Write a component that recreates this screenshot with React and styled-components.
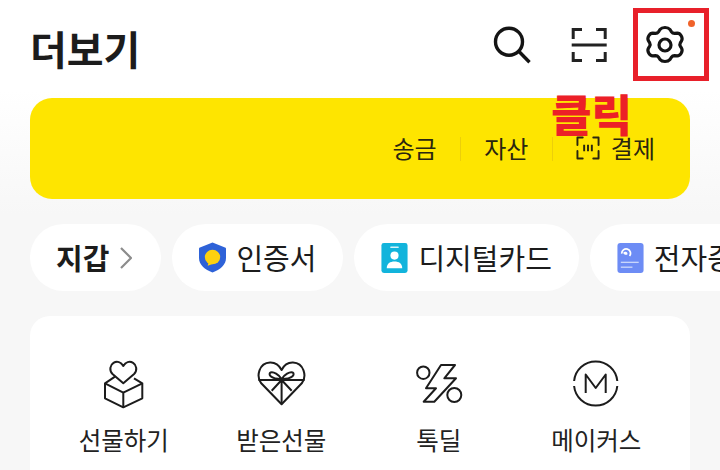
import styled, { createGlobalStyle } from "styled-components";

const Global = createGlobalStyle`
  html, body { margin: 0; padding: 0; }
  body {
    width: 720px;
    height: 470px;
    overflow: hidden;
    background: linear-gradient(to bottom, #ffffff 0, #ffffff 90px, #f7f7f7 215px);
    font-family: "Noto Sans CJK KR", "Noto Sans", sans-serif;
    color: #1c1c1c;
  }
`;

const Page = styled.div`
  position: relative;
  width: 720px;
  height: 470px;
  overflow: hidden;
`;

const Header = styled.header`
  display: flex;
  align-items: center;
  justify-content: space-between;
  height: 98px;
  padding: 0 35px 8px 30px;
  box-sizing: border-box;
`;

const Title = styled.h1`
  margin: 5px 0 0;
  font-size: 40px;
  font-weight: 700;
  line-height: 1;
`;

const HeaderIcons = styled.div`
  display: flex;
  align-items: center;
  gap: 36px;
`;

const IconSlot = styled.div`
  position: relative;
  width: 40px;
  height: 40px;
`;

const Dot = styled.span`
  position: absolute;
  top: -5px;
  left: 43px;
  width: 7px;
  height: 7px;
  border-radius: 50%;
  background: #f0622a;
`;

const PayCard = styled.section`
  display: flex;
  align-items: center;
  justify-content: flex-end;
  height: 101px;
  margin: 0 30px;
  padding-right: 35px;
  border-radius: 22px;
  background: #fee500;
`;

const PayItem = styled.span`
  display: flex;
  align-items: center;
  gap: 11px;
  padding-bottom: 2px;
  font-size: 24px;
  line-height: 1;
  color: #2a2610;
`;

const PaySep = styled.i`
  display: block;
  width: 1px;
  height: 24px;
  margin: 0 23px 0 23.5px;
  background: #eccf0a;
`;

const ChipRow = styled.nav`
  display: flex;
  gap: 11px;
  margin: 25px 0 0 30px;
  width: 800px;
`;

const Chip = styled.div`
  display: flex;
  flex: none;
  align-items: center;
  gap: 10px;
  height: 67px;
  padding: 0 27px;
  box-sizing: border-box;
  border-radius: 34px;
  background: #ffffff;
  font-size: 29px;
  line-height: 1;
  white-space: nowrap;
`;

const WalletChip = styled(Chip)`
  gap: 11px;
  padding: 0 29px 0 26px;
  font-weight: 700;
`;

const MenuCard = styled.section`
  display: grid;
  grid-template-columns: repeat(4, 157.5px);
  justify-content: center;
  margin: 25px 30px 0;
  padding-top: 44px;
  height: 200px;
  box-sizing: border-box;
  border-radius: 20px;
  background: #ffffff;
`;

const MenuItem = styled.div`
  display: flex;
  flex-direction: column;
  align-items: center;
  gap: 12px;
  font-size: 24.500px;
  line-height: 36px;
  color: #222222;
`;

const ClickBox = styled.div`
  position: absolute;
  top: 8px;
  left: 633px;
  width: 76px;
  height: 73px;
  box-sizing: border-box;
  border: 5px solid #e8202a;
`;

const ClickLabel = styled.div`
  position: absolute;
  top: 85px;
  left: 551px;
  font-size: 44px;
  line-height: 56px;
  font-weight: 900;
  color: #ec2027;
`;

const Line = ({ children }) => (
  <svg width="50" height="50" viewBox="0 0 50 50" fill="none" stroke="#1c1c1c" strokeWidth="2" strokeLinejoin="round">
    {children}
  </svg>
);

const SearchIcon = () => (
  <svg width="40" height="40" viewBox="0 0 40 40" fill="none" stroke="#141414" strokeWidth="3.400">
    <circle cx="16" cy="16.700" r="13.500" />
    <path d="M26 26.500l10.500 10.800" />
  </svg>
);

const ScanIcon = () => (
  <svg width="40" height="40" viewBox="0 0 40 40" fill="none" stroke="#222" strokeWidth="3">
    <path d="M4.200 14V4.500H13M27 4.500h9.200V14M4.200 27v8.500H13M27 35.500h9.200V27" />
    <path d="M2.700 20h35" />
  </svg>
);

const GearIcon = () => (
  <svg width="40" height="40" viewBox="0 0 40 40" fill="none" stroke="#141414" strokeWidth="3.200" strokeLinejoin="round">
    <path d="M15 4.500c1-1.200 2.500-2 5-2s4 .8 5 2l1.500 2.300c.7 1 1.800 1.500 3 1.500l2.800-.1c1.600 0 2.800.7 3.900 2.600s1.200 3.500 .4 4.900l-1.300 2.200c-.6 1.100-.6 2.100 0 3.200l1.300 2.200c.8 1.400 .7 3-.4 4.900s-2.300 2.600-3.900 2.600l-2.800-.1c-1.200 0-2.300.5-3 1.500l-1.500 2.300c-1 1.200-2.500 2-5 2s-4-.8-5-2l-1.500-2.300c-.7-1-1.800-1.500-3-1.500l-2.800.1c-1.600 0-2.800-.7-3.900-2.600s-1.200-3.500-.4-4.900l1.300-2.200c.6-1.100.6-2.100 0-3.200l-1.300-2.200c-.8-1.400-.7-3 .4-4.900s2.300-2.600 3.900-2.600l2.800.1c1.200 0 2.300-.5 3-1.500z" />
    <circle cx="20" cy="20" r="6" />
  </svg>
);

const PayIcon = () => (
  <svg width="24" height="24" viewBox="0 0 25 24" fill="none" stroke="#2a2610" strokeWidth="2" strokeLinecap="round" strokeLinejoin="round">
    <path d="M7 1H1.500v8M18 1h5.500v8M7 23H1.500v-8M18 23h5.500v-8" />
    <path d="M8.500 8.500v7M12.500 8.500v7M16.500 8.500v7" strokeLinecap="butt" />
  </svg>
);

const Chevron = () => (
  <svg width="12" height="22" viewBox="0 0 12 22" fill="none" stroke="#8c8c8c" strokeWidth="2.200">
    <path d="M1 1l10 10L1 21" />
  </svg>
);

const ShieldIcon = () => (
  <svg width="27" height="31" viewBox="0 0 28 31">
    <path d="M14 0l13 5c1 .4 1 1 1 2v9c0 7-6 12-14 15C6 28 0 23 0 16V7c0-1 0-1.600 1-2z" fill="#2e62d8" />
    <ellipse cx="14" cy="15" rx="8" ry="7.500" fill="#fdd10f" />
    <path d="M10 20l-1 4 6-2z" fill="#fdd10f" />
  </svg>
);

const IdCardIcon = () => (
  <svg width="27" height="30" viewBox="0 0 27 31">
    <rect width="27" height="31" rx="2.500" fill="#12b4dc" />
    <rect x="9" y="3.500" width="9" height="1.600" rx=".8" fill="#d7f3fa" />
    <circle cx="13.500" cy="13" r="4.200" fill="#fff" />
    <path d="M5.500 26c0-5 3.500-7 8-7s8 2 8 7z" fill="#fff" />
  </svg>
);

const CertIcon = () => (
  <svg width="27" height="30" viewBox="0 0 27 31" fill="none">
    <rect width="27" height="31" rx="3" fill="#6d8cf5" />
    <path d="M4.500 11a4.500 4.500 0 1 1 8 2.500" stroke="#fff" strokeWidth="1.800" />
    <path d="M6 10a2.500 2.500 0 0 1 4.500 1.500c-1.500 1.500-4 .5-4.500-1.500z" fill="#fff" />
    <path d="M3.500 20h18.500" stroke="#c9d6fb" strokeWidth="1.400" />
    <path d="M3.500 25h12" stroke="#c9d6fb" strokeWidth="1.400" />
  </svg>
);

const GiftBoxIcon = () => (
  <Line>
    <path d="M24.300 23.300L13.500 14c-3.500-3.500-2.500-9 1-11.200 3.500-2 7.500-.8 9.800 3.200 2.300-4 6.300-5.200 9.800-3.200 3.500 2.200 4.500 7.700 1 11.200z" />
    <path d="M16 16.700L6 23.300v15L24.300 47.300l19-9v-15l-8.300-5" />
    <path d="M6 23.300L24.300 32.700l19-9.400M24.300 32.700v14.600" />
  </Line>
);

const HeartGiftIcon = () => (
  <Line>
    <path d="M25.600 44.300L5 23C0 16 3 3 14 2.500 19 2.300 23 5 25.600 10 28 5 32 2.300 37 2.500 48 3 51 16 46 23z" />
    <path d="M2.500 20H48.500M25.600 20v24M25.600 20L15.700 30.700M25.600 20l10.100 10.700" />
    <path d="M25.600 19c-3-4.500-8-7.500-11-6.500-2.500 1.200-1 6.500 11 6.500zM25.600 19c3-4.500 8-7.500 11-6.500 2.500 1.200 1 6.500-11 6.500z" />
  </Line>
);

const DealIcon = () => (
  <Line>
    <circle cx="9.300" cy="12.700" r="6.200" />
    <circle cx="40.300" cy="35" r="7" />
    <path d="M27 5h14L30.300 18.300H42L20.300 41.700H9.700L22 28.300H12z" />
  </Line>
);

const MakersIcon = () => (
  <Line>
    <path d="M3.100 26A21.700 21.700 0 0 0 46.300 26M3.100 21A21.700 21.700 0 0 1 46.300 21" />
    <path d="M14.700 33V14.500l10 13.500 10-13.500V33" />
  </Line>
);

const menu = [
  ["선물하기", GiftBoxIcon],
  ["받은선물", HeartGiftIcon],
  ["톡딜", DealIcon],
  ["메이커스", MakersIcon],
];

export default function App() {
  return (
    <Page>
      <Global />
      <Header>
        <Title>더보기</Title>
        <HeaderIcons>
          <IconSlot><SearchIcon /></IconSlot>
          <IconSlot><ScanIcon /></IconSlot>
          <IconSlot><GearIcon /><Dot /></IconSlot>
        </HeaderIcons>
      </Header>
      <PayCard>
        <PayItem>송금</PayItem>
        <PaySep />
        <PayItem>자산</PayItem>
        <PaySep />
        <PayItem><PayIcon />결제</PayItem>
      </PayCard>
      <ChipRow>
        <WalletChip>지갑<Chevron /></WalletChip>
        <Chip><ShieldIcon />인증서</Chip>
        <Chip><IdCardIcon />디지털카드</Chip>
        <Chip><CertIcon />전자증명서</Chip>
      </ChipRow>
      <MenuCard>
        {menu.map(([label, Icon]) => (
          <MenuItem key={label}>
            <Icon />
            {label}
          </MenuItem>
        ))}
      </MenuCard>
      <ClickBox />
      <ClickLabel>클릭</ClickLabel>
    </Page>
  );
}
